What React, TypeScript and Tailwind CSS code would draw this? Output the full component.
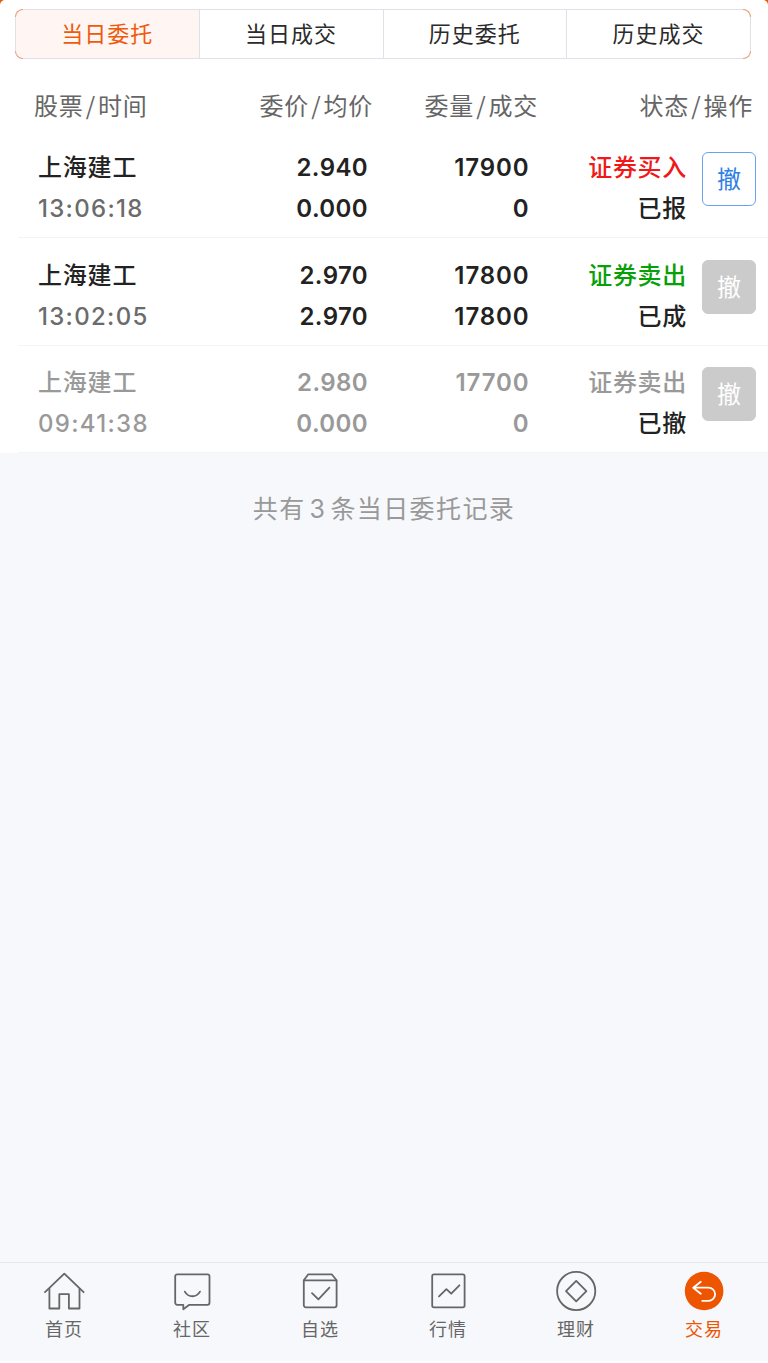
import type { ReactNode } from "react";
import clsx from "clsx";

interface Order {
  name: string;
  time: string;
  price: string;
  avgPrice: string;
  amount: string;
  dealt: string;
  side: string;
  sideColor: string;
  status: string;
  cancelable: boolean;
  canceled: boolean;
}

const tabs = ["当日委托", "当日成交", "历史委托", "历史成交"];

const orders: Order[] = [
  {
    name: "上海建工",
    time: "13:06:18",
    price: "2.940",
    avgPrice: "0.000",
    amount: "17900",
    dealt: "0",
    side: "证券买入",
    sideColor: "text-[#f01818]",
    status: "已报",
    cancelable: true,
    canceled: false,
  },
  {
    name: "上海建工",
    time: "13:02:05",
    price: "2.970",
    avgPrice: "2.970",
    amount: "17800",
    dealt: "17800",
    side: "证券卖出",
    sideColor: "text-[#08a008]",
    status: "已成",
    cancelable: false,
    canceled: false,
  },
  {
    name: "上海建工",
    time: "09:41:38",
    price: "2.980",
    avgPrice: "0.000",
    amount: "17700",
    dealt: "0",
    side: "证券卖出",
    sideColor: "text-[#999999]",
    status: "已撤",
    cancelable: false,
    canceled: true,
  },
];

const Icon = ({ children }: { children: ReactNode }) => (
  <svg
    width="42"
    height="42"
    viewBox="0 0 42 42"
    fill="none"
    stroke="currentColor"
    strokeWidth="1.8"
    strokeLinejoin="round"
    strokeLinecap="round"
  >
    {children}
  </svg>
);

const navItems = [
  {
    label: "首页",
    icon: (
      <Icon>
        <path d="M2 22.2 21.3 3.6 40.6 22.2" />
        <path d="M6.4 18.6v19.9h9.9V24.2h9.6v14.3h10.6V18.6" />
      </Icon>
    ),
  },
  {
    label: "社区",
    icon: (
      <Icon>
        <path d="M6.2 4.3h30.3a2 2 0 0 1 2 2v26.5a2 2 0 0 1-2 2H18.3l-6 4.4v-4.4H6.2a2 2 0 0 1-2-2V6.3a2 2 0 0 1 2-2z" />
        <path d="M13.8 21.6c3.6 6.2 11.6 6.2 15.2 0" />
      </Icon>
    ),
  },
  {
    label: "自选",
    icon: (
      <Icon>
        <path d="M4.8 10.3 9.3 4.3h23.4l4.9 6v25a2 2 0 0 1-2 2H6.8a2 2 0 0 1-2-2z" />
        <path d="M5 10.3h32.4" />
        <path d="m13 23.2 6.4 6.2 11-11.8" />
      </Icon>
    ),
  },
  {
    label: "行情",
    icon: (
      <Icon>
        <rect x="5.2" y="4.3" width="32.4" height="33" rx="1.8" />
        <path d="m12 26.4 7.4-7.3 4.8 4.6 8.2-8.4" />
      </Icon>
    ),
  },
  {
    label: "理财",
    icon: (
      <Icon>
        <circle cx="21.2" cy="21" r="19.1" />
        <path d="m21.2 10.9 10.2 10.2-10.2 10.2L11 21.1z" />
      </Icon>
    ),
  },
  {
    label: "交易",
    icon: (
      <Icon>
        <circle cx="21.1" cy="21" r="19.3" fill="#ee5500" stroke="none" />
        <path
          d="m17.8 11.7-7.6 6 7.6 6M10.6 17.7h14.9a6.6 6.6 0 0 1 0 13.2h-6.2"
          stroke="#fff"
        />
      </Icon>
    ),
  },
];

const ColumnTitle = ({ left, right }: { left: string; right: string }) => (
  <>
    {left}
    <span className="mx-[2.3px] font-['Noto_Sans_CJK_SC',sans-serif]">/</span>
    {right}
  </>
);

const OrderRow = ({ order }: { order: Order }) => {
  const main = order.canceled ? "text-[#999999]" : "text-[#222222]";
  const sub = order.canceled ? "text-[#999999]" : "text-[#6b6b6b]";

  return (
    <div className="ml-[18px] flex h-[107.8px] border-b border-[#f3f4f6] pt-[16.8px] pl-5 text-2xl leading-[41px] font-medium">
      <div className="w-[140px]">
        <p className={clsx("tracking-[0.8px]", main)}>{order.name}</p>
        <p className={clsx("tracking-[1.3px]", sub)}>{order.time}</p>
      </div>
      <div
        className={clsx("w-[190px] text-right font-semibold tracking-[0.4px]", main)}
      >
        <p>{order.price}</p>
        <p>{order.avgPrice}</p>
      </div>
      <div
        className={clsx(
          "w-[161.5px] text-right font-semibold tracking-[0.9px]",
          main
        )}
      >
        <p>{order.amount}</p>
        <p>{order.dealt}</p>
      </div>
      <div className="w-[157.5px] text-right tracking-[0.7px]">
        <p className={order.sideColor}>{order.side}</p>
        <p className="text-[#222222]">{order.status}</p>
      </div>
      <button
        disabled={!order.cancelable}
        className={clsx(
          "mt-[5px] ml-[15px] flex size-[54px] items-center justify-center rounded-md border pt-0.5 text-2xl font-normal",
          order.cancelable
            ? "border-[#6ba3ea] bg-white text-[#2f80e4]"
            : "border-[#cbcbcb] bg-[#cbcbcb] text-white"
        )}
      >
        撤
      </button>
    </div>
  );
};

const App = () => {
  return (
    <div className="flex h-[1363px] w-[768px] flex-col overflow-hidden border-b-2 border-white bg-[#f7f8fb] font-[Inter,'Noto_Sans_CJK_SC',sans-serif]">
      <div className="bg-[#ee5500]">
        <div className="rounded-t-[5px] bg-white pt-[9px]">
          {/* Tabs, the orange outline only shows at the rounded corners */}
          <div className="relative ml-[15px] mr-[17px]">
            <div className="flex h-[50px] overflow-hidden rounded-lg border border-[#dfe0e8]">
              {tabs.map((tab, index) => (
                <button
                  key={tab}
                  className={clsx(
                    "flex-1 pt-px text-[22px] tracking-[1px]",
                    index === 0
                      ? "bg-[#fff5f2] text-[#ee5a0c]"
                      : "border-l border-[#dfe0e8] text-[#2b2b2b]"
                  )}
                >
                  {tab}
                </button>
              ))}
            </div>
            <span className="absolute top-0 left-0 size-2 rounded-tl-lg border-t border-l border-[#f0a07a]" />
            <span className="absolute bottom-0 left-0 size-2 rounded-bl-lg border-b border-l border-[#f0a07a]" />
            <span className="absolute top-0 right-0 size-2 rounded-tr-lg border-t border-r border-[#f0a07a]" />
            <span className="absolute right-0 bottom-0 size-2 rounded-br-lg border-r border-b border-[#f0a07a]" />
          </div>

          {/* Column titles */}
          <div className="flex h-[71px] pt-[29px] pl-[34px] text-2xl leading-[34px] tracking-[0.7px] text-[#666666]">
            <p className="w-[150px]">
              <ColumnTitle left="股票" right="时间" />
            </p>
            <p className="w-[189px] text-right">
              <ColumnTitle left="委价" right="均价" />
            </p>
            <p className="w-[165px] text-right">
              <ColumnTitle left="委量" right="成交" />
            </p>
            <p className="w-[215px] text-right">
              <ColumnTitle left="状态" right="操作" />
            </p>
          </div>

          {orders.map((order) => (
            <OrderRow key={order.time} order={order} />
          ))}
        </div>
      </div>

      <p className="mt-[38px] flex-1 text-center text-[25px] leading-9 tracking-[1.4px] text-[#999999]">
        共有<span className="mx-1">3</span>条当日委托记录
      </p>

      <nav className="flex h-[99px] border-t border-[#e5e8ec] pt-[7px]">
        {navItems.map((item) => (
          <div
            key={item.label}
            className={clsx(
              "flex flex-1 flex-col items-center text-lg leading-9 tracking-[1px]",
              item.label === "交易" ? "text-[#ee5500]" : "text-[#666666]"
            )}
          >
            {item.icon}
            {item.label}
          </div>
        ))}
      </nav>
    </div>
  );
};

export default App;
